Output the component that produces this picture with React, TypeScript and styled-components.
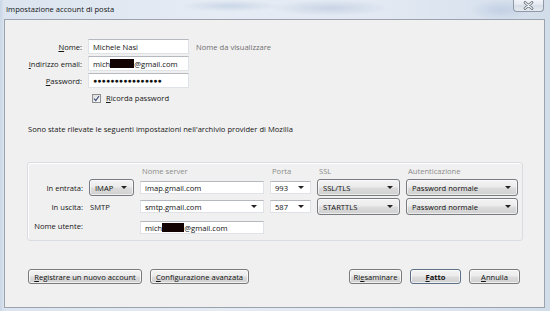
import React from "react";
import styled, { createGlobalStyle } from "styled-components";

const Global = createGlobalStyle`
  html, body { margin: 0; padding: 0; }
  body { width: 550px; height: 311px; overflow: hidden; font-family: "Open Sans", "Noto Sans", sans-serif; font-size: 7.6px; color: #161616; }
  * { box-sizing: border-box; }
`;

const Window = styled.div`
  width: 550px;
  height: 311px;
  display: flex;
  flex-direction: column;
  padding: 0 5px 3px 4px;
  background:
    radial-gradient(ellipse 60px 8px at 330px 8px, rgba(150,170,200,0.35), transparent),
    radial-gradient(ellipse 50px 6px at 230px 6px, rgba(150,175,205,0.35), transparent),
    radial-gradient(ellipse 30px 10px at 500px 10px, rgba(150,170,210,0.3), transparent),
    linear-gradient(90deg, #c9d6e6 0px, #dbe4ef 4px, #e6ecf4 40%, #e2e9f3 70%, #d2ddea 100%);
`;

const TitleBar = styled.div`
  position: relative;
  height: 19px;
  display: flex;
  align-items: center;
  padding-left: 2px;
  padding-bottom: 1px;
`;

const Title = styled.span`
  color: #141414;
`;

const CloseBtn = styled.div`
  position: absolute;
  right: 1px;
  top: -1px;
  width: 31px;
  height: 13px;
  border: 1px solid #8f9aa6;
  border-top: none;
  border-radius: 0 0 4px 4px;
  background: linear-gradient(#f4f7fb, #e4e9f0 50%, #d6dde6 51%, #e6ebf1);
  display: flex;
  align-items: center;
  justify-content: center;
`;

const Client = styled.div`
  flex: 1;
  border: 1px solid #9ba4ae;
  background: #f0f0f0;
  display: flex;
  flex-direction: column;
`;

const IdentityGrid = styled.div`
  display: grid;
  grid-template-columns: 77px 101px auto;
  grid-auto-rows: 15px;
  column-gap: 6px;
  row-gap: 2px;
  padding-top: 19px;
  align-items: center;
`;

const Label = styled.label`
  justify-self: end;
  white-space: nowrap;
`;

const Key = styled.span`
  text-decoration: underline;
  text-underline-offset: 1px;
`;

const TextBox = styled.div<{ $h?: number; $end?: boolean }>`
  height: ${(p) => p.$h ?? 15}px;
  align-self: ${(p) => (p.$end ? "end" : "center")};
  background: #fff;
  border: 1px solid #dfe3e8;
  border-top-color: #b5b8bd;
  display: flex;
  align-items: center;
  padding-left: 4px;
  white-space: nowrap;
  color: #111;
  overflow: hidden;
`;

const Redact = styled.span<{ $w: number }>`
  display: inline-block;
  flex: none;
  width: ${(p) => p.$w}px;
  height: 9px;
  background: #120202;
`;

const Dots = styled.span`
  font-size: 6.8px;
  letter-spacing: 0.2px;
  color: #111;
`;

const Hint = styled.span`
  color: #6f6f6f;
  padding-left: 1px;
  white-space: nowrap;
`;

const CheckRow = styled.div`
  display: flex;
  align-items: center;
  gap: 5px;
  margin: 5px 0 0 87px;
  height: 10px;
`;

const CheckBox = styled.div`
  width: 9px;
  height: 9px;
  border: 1px solid #8e8f8f;
  background: linear-gradient(135deg, #dcdcdc, #fafafa);
  display: flex;
  align-items: center;
  justify-content: center;
`;

const Notice = styled.div`
  margin: 21px 0 0 23px;
  line-height: 10px;
  height: 10px;
  white-space: nowrap;
`;

const Group = styled.div`
  margin: 28px 0 0 22px;
  width: 496px;
  height: 79px;
  border: 1px solid #d9dde2;
  border-radius: 3px;
  box-shadow: inset 1px 1px 0 #fdfdfd;
  padding: 2px 0 0 4px;
`;

const ServerGrid = styled.div`
  display: grid;
  grid-template-columns: 51px 45px 124px 41px 83px 112px;
  grid-template-rows: 12px 17px 17px 17px;
  column-gap: 6px;
  row-gap: 2px;
  align-items: center;
`;

const ColHead = styled.span`
  color: #8c8c8c;
  padding-left: 2px;
  white-space: nowrap;
`;

const Plain = styled.span`
  padding-left: 1px;
  white-space: nowrap;
`;

const SelectBtn = styled.div`
  height: 17px;
  border: 1px solid #777a7e;
  border-radius: 3px;
  background: linear-gradient(#f3f3f3 0%, #ebebeb 48%, #dcdcdc 52%, #d0d0d0 100%);
  display: flex;
  align-items: center;
  justify-content: space-between;
  padding: 0 6px 0 5px;
  white-space: nowrap;
  color: #111;
  box-shadow: inset 0 0 0 1px rgba(255,255,255,0.6);
`;

const Arrow = styled.span`
  width: 0;
  height: 0;
  border-left: 3px solid transparent;
  border-right: 3px solid transparent;
  border-top: 3px solid #222;
  flex: none;
`;

const ComboField = styled(TextBox)`
  justify-content: space-between;
  padding-right: 6px;
`;

const ButtonBar = styled.div`
  display: flex;
  justify-content: space-between;
  margin: 28px 24px 0 23px;
`;

const ButtonGroup = styled.div`
  display: flex;
  gap: 8px;
`;

const PushButton = styled.button<{ $w: number; $default?: boolean }>`
  width: ${(p) => p.$w}px;
  height: 15px;
  padding: 0;
  font: inherit;
  font-weight: ${(p) => (p.$default ? 700 : 400)};
  color: #111;
  border: 1px solid ${(p) => (p.$default ? "#5c6f84" : "#7a7a7a")};
  border-radius: 3px;
  background: linear-gradient(#f3f3f3 0%, #ebebeb 48%, #dddddd 52%, #cfcfcf 100%);
  box-shadow: inset 0 0 0 1px rgba(255,255,255,0.7);
  display: flex;
  align-items: center;
  justify-content: center;
  white-space: nowrap;
`;

export default function App() {
  return (
    <>
      <Global />
      <Window>
        <TitleBar>
          <Title>Impostazione account di posta</Title>
          <CloseBtn>
            <svg width="11" height="9" viewBox="0 0 11 9">
              <path d="M2 1.5 L9 7.5 M9 1.5 L2 7.5" stroke="#5d6670" strokeWidth="2.6" strokeLinecap="round" />
              <path d="M2 1.5 L9 7.5 M9 1.5 L2 7.5" stroke="#f4f6f8" strokeWidth="1.1" strokeLinecap="round" />
            </svg>
          </CloseBtn>
        </TitleBar>
        <Client>
          <IdentityGrid>
            <Label><Key>N</Key>ome:</Label>
            <TextBox>Michele Nasi</TextBox>
            <Hint>Nome da visualizzare</Hint>
            <Label><Key>I</Key>ndirizzo email:</Label>
            <TextBox>mich<Redact $w={24} />@gmail.com</TextBox>
            <span />
            <Label><Key>P</Key>assword:</Label>
            <TextBox><Dots>●●●●●●●●●●●●●●●●</Dots></TextBox>
            <span />
          </IdentityGrid>
          <CheckRow>
            <CheckBox>
              <svg width="7" height="7" viewBox="0 0 7 7">
                <path d="M1 3.6 L2.8 5.6 L6 1" stroke="#3c4f7a" strokeWidth="1.2" fill="none" />
              </svg>
            </CheckBox>
            <span><Key>R</Key>icorda password</span>
          </CheckRow>
          <Notice>Sono state rilevate le seguenti impostazioni nell'archivio provider di Mozilla</Notice>
          <Group>
            <ServerGrid>
              <span />
              <span />
              <ColHead>Nome server</ColHead>
              <ColHead>Porta</ColHead>
              <ColHead>SSL</ColHead>
              <ColHead>Autenticazione</ColHead>

              <Label>In entrata:</Label>
              <SelectBtn>IMAP<Arrow /></SelectBtn>
              <TextBox $h={13}>imap.gmail.com</TextBox>
              <ComboField $h={13}>993<Arrow /></ComboField>
              <SelectBtn>SSL/TLS<Arrow /></SelectBtn>
              <SelectBtn>Password normale<Arrow /></SelectBtn>

              <Label>In uscita:</Label>
              <Plain>SMTP</Plain>
              <ComboField $h={13}>smtp.gmail.com<Arrow /></ComboField>
              <ComboField $h={13}>587<Arrow /></ComboField>
              <SelectBtn>STARTTLS<Arrow /></SelectBtn>
              <SelectBtn>Password normale<Arrow /></SelectBtn>

              <Label>Nome utente:</Label>
              <span />
              <TextBox $h={13} $end>mich<Redact $w={22} />@gmail.com</TextBox>
            </ServerGrid>
          </Group>
          <ButtonBar>
            <ButtonGroup>
              <PushButton $w={114}><Key>R</Key>egistrare un nuovo account</PushButton>
              <PushButton $w={99}><Key>C</Key>onfigurazione avanzata</PushButton>
            </ButtonGroup>
            <ButtonGroup>
              <PushButton $w={53}>Ri<Key>e</Key>saminare</PushButton>
              <PushButton $w={51} $default><Key>F</Key>atto</PushButton>
              <PushButton $w={51}><Key>A</Key>nnulla</PushButton>
            </ButtonGroup>
          </ButtonBar>
        </Client>
      </Window>
    </>
  );
}
